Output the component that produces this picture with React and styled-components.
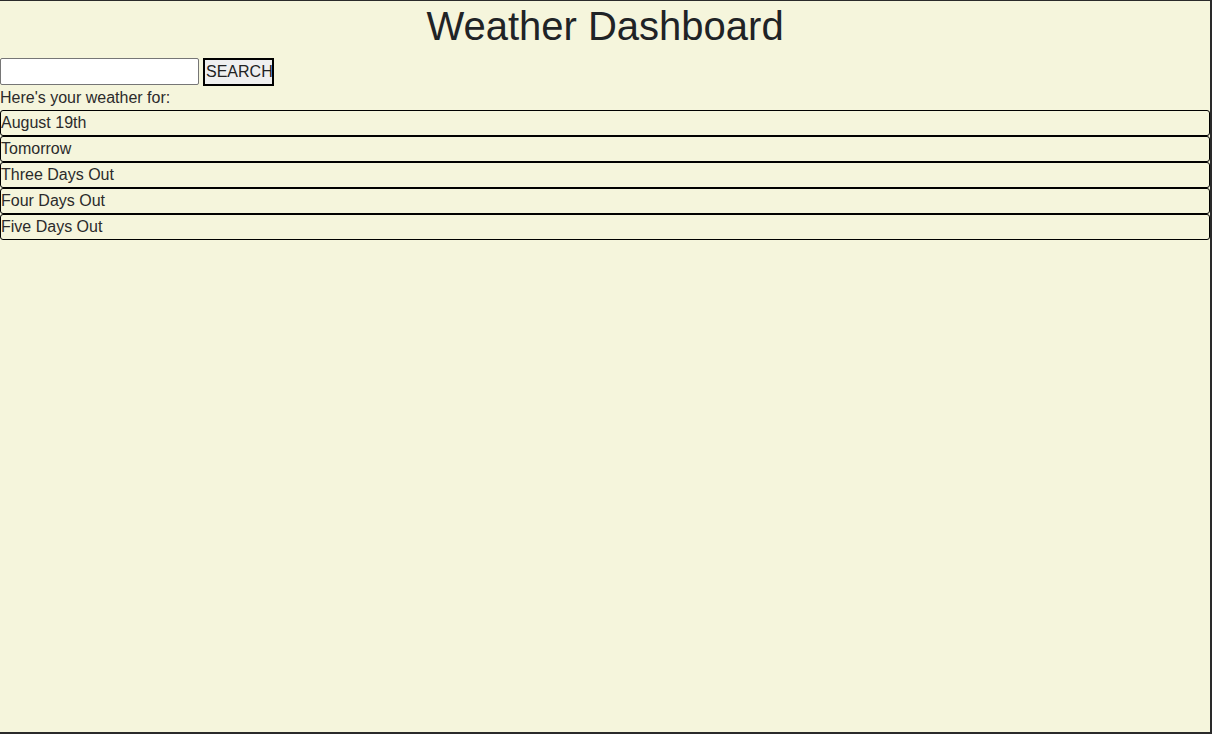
import React from 'react';
import styled, { createGlobalStyle } from 'styled-components';

const GlobalStyle = createGlobalStyle`
  html, body {
    margin: 0;
    padding: 0;
    background: #1e1e1e;
  }
  body {
    font-family: "Liberation Sans", Arial, sans-serif;
    color: #2b2b2b;
  }
`;

const Page = styled.div`
  box-sizing: border-box;
  width: 1212px;
  height: 734px;
  background: #f5f5dc;
  border-top: 1px solid #2a2a2a;
  border-right: 2px solid #2a2a2a;
  border-bottom: 2px solid #2a2a2a;
  overflow: hidden;
`;

const Title = styled.h1`
  margin: 0;
  padding-top: 2px;
  text-align: center;
  font-size: 40px;
  font-weight: 400;
  line-height: 46px;
  color: #1f2326;
`;

const SearchBar = styled.div`
  display: flex;
  align-items: flex-start;
  gap: 4px;
  margin-top: 9px;
`;

const SearchInput = styled.input`
  box-sizing: border-box;
  width: 199px;
  height: 27px;
  margin: 0;
  border: 1px solid #767676;
  border-radius: 2px;
  background: #fff;
  font-family: inherit;
  font-size: 16px;
`;

const SearchButton = styled.button`
  box-sizing: border-box;
  width: 71px;
  height: 28px;
  margin: 0;
  padding: 0 1px;
  border: 2px solid #000;
  background: #efefef;
  color: #222;
  font-family: inherit;
  font-size: 16px;
`;

const Intro = styled.div`
  font-size: 16px;
  line-height: 18px;
  margin-top: 2px;
  padding-top: 1px;
`;

const DayList = styled.div`
  display: flex;
  flex-direction: column;
  margin-top: 3px;
  width: 1210px;
`;

const DayCard = styled.div`
  box-sizing: border-box;
  height: 26px;
  padding: 3px 0;
  border: 1px solid #000;
  border-radius: 3px;
  font-size: 16px;
  line-height: 18px;
`;

const days = ['August 19th', 'Tomorrow', 'Three Days Out', 'Four Days Out', 'Five Days Out'];

const App = () =>
  <>
    <GlobalStyle />
    <Page>
      <Title>Weather Dashboard</Title>
      <SearchBar>
        <SearchInput type="text" />
        <SearchButton>SEARCH</SearchButton>
      </SearchBar>
      <Intro>Here&apos;s your weather for:</Intro>
      <DayList>
        {days.map(day => <DayCard key={day}>{day}</DayCard>)}
      </DayList>
    </Page>
  </>;

export default App;
